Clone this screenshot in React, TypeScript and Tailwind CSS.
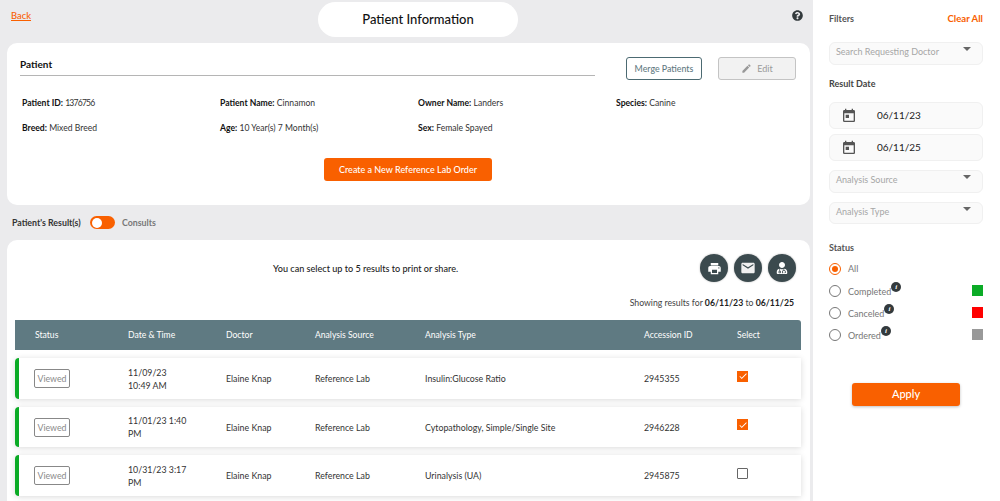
import React from "react";
import { MdPrint, MdEmail, MdToday, MdEdit, MdCheck } from "react-icons/md";
import { FaUserMd, FaQuestionCircle } from "react-icons/fa";

const font = "font-['Lato','Noto_Sans',sans-serif]";

function Field({ k, v, tight }: { k: string; v: string; tight?: boolean }) {
  return (
    <div className="text-[8.6px] leading-[14px] text-[#333]">
      <span className="font-bold text-[#111]">{k}:</span>{" "}
      <span className={tight ? "tracking-[-0.8px]" : ""}>{v}</span>
    </div>
  );
}

function Select({ label, className }: { label: string; className: string }) {
  return (
    <div className={`flex items-start justify-between bg-[#fafafa] border border-[#f0f0f0] rounded-md pl-[6px] pr-[11px] pt-[2px] ${className}`}>
      <span className="text-[9px] leading-[14px] text-[#a6a6a6]">{label}</span>
      <span className="mt-[2px] w-0 h-0 border-x-[4px] border-x-transparent border-t-[4px] border-t-[#666]" />
    </div>
  );
}

function DateBox({ value, className }: { value: string; className: string }) {
  return (
    <div className={`flex items-center h-[27px] bg-[#fafafa] border border-[#f0f0f0] rounded-md pl-[11px] ${className}`}>
      <MdToday className="text-[#555] w-[16px] h-[16px]" />
      <span className="ml-[20px] text-[10px] text-[#222]">{value}</span>
    </div>
  );
}

function Radio({ label, color, checked, className }: { label: string; color?: string; checked?: boolean; className?: string }) {
  return (
    <div className={`flex items-center h-[13px] ${className ?? ""}`}>
      <span className={`w-[12px] h-[12px] rounded-full border-[1.5px] flex items-center justify-center ${checked ? "border-[#f96000]" : "border-[#777]"}`}>
        {checked && <span className="w-[6px] h-[6px] rounded-full bg-[#f96000]" />}
      </span>
      <span className={`ml-[7px] text-[9px] text-[#777] leading-[13px] ${color ? "mt-[2px]" : ""}`}>{label}</span>
      {color && (
        <span className="w-[10px] h-[10px] -mt-[8px] rounded-full bg-[#333a3d] text-white text-[7px] leading-[10px] text-center italic font-bold font-['Liberation_Serif',serif]">i</span>
      )}
      {color && <span className="ml-auto w-[11px] h-[11px]" style={{ backgroundColor: color }} />}
    </div>
  );
}

function Row({ date, time, type, id, checked }: { date: string; time: string; type: string; id: string; checked: boolean }) {
  return (
    <div className="grid grid-cols-[109px_98px_89px_110px_219px_93px_1fr] items-center h-[40.5px] pt-[1px] mb-[8px] bg-white rounded-l-[4px] border-l-[4px] border-[#0bab26] shadow-[0_1px_6px_rgba(0,0,0,0.15)] text-[8.8px] text-[#333]">
      <div className="pl-[15px]">
        <span className="flex items-center justify-center w-[36px] h-[19px] border border-[#888] rounded-[2px] text-[#8a8a8a] text-[8.8px]">Viewed</span>
      </div>
      <div className="leading-[13px] whitespace-nowrap">{date}<br />{time}</div>
      <div>Elaine Knap</div>
      <div>Reference Lab</div>
      <div>{type}</div>
      <div>{id}</div>
      <div className="-mt-[5px]">
        {checked ? (
          <span className="flex items-center justify-center w-[11px] h-[11px] bg-[#f96000]">
            <MdCheck className="text-white w-[10px] h-[10px]" />
          </span>
        ) : (
          <span className="block w-[11px] h-[11px] border-[1.5px] border-[#666] rounded-[1px]" />
        )}
      </div>
    </div>
  );
}

function Round({ children }: { children: React.ReactNode }) {
  return (
    <span className="flex items-center justify-center w-[28px] h-[28px] rounded-full bg-[#3b4a4e] text-white shadow-[0_0_2px_rgba(0,0,0,0.3)]">
      {children}
    </span>
  );
}

export default function App() {
  return (
    <div className={`${font} w-[1000px] h-[501px] overflow-hidden flex bg-[#ebebed]`}>
      <main className="w-[813px] shrink-0 flex flex-col pl-[7px] pr-[3px]">
        <header className="h-[43px] flex items-start shrink-0">
          <a className="mt-[9px] ml-[4px] w-[20px] text-[9.4px] font-medium leading-[14px] text-[#f96000] underline">Back</a>
          <div className="ml-[287px] mt-[2px] w-[200px] h-[35px] rounded-full bg-white flex items-center justify-center text-[13px] font-medium text-[#111]">Patient Information</div>
          <FaQuestionCircle className="ml-[274px] mt-[10px] w-[11px] h-[11px] text-[#333a3d]" />
        </header>

        <section className="h-[162px] shrink-0 bg-white rounded-[10px] pt-[14px]">
          <div className="flex items-start">
            <div className="ml-[13px] w-[575px] h-[19px] border-b border-[#b5b5b5] text-[10px] leading-[14px] font-bold text-[#111]">Patient</div>
            <button className="ml-[31px] w-[76px] h-[23px] border-[1.5px] border-[#4c6a72] rounded-[3px] text-[8.8px] text-[#5f7a82] font-medium">Merge Patients</button>
            <button className="ml-[16px] w-[78px] h-[23px] border border-[#c4c4c4] rounded-[3px] bg-[#f2f2f2] text-[9px] text-[#9a9a9a] flex items-center justify-center gap-[5px]">
              <MdEdit className="w-[11px] h-[11px] text-[#999]" /> Edit
            </button>
          </div>
          <div className="ml-[15px] mt-[16px] grid grid-cols-[198px_198px_198px_1fr] gap-y-[11px]">
            <Field k="Patient ID" v="1376756" tight />
            <Field k="Patient Name" v="Cinnamon" />
            <Field k="Owner Name" v="Landers" />
            <Field k="Species" v="Canine" />
            <Field k="Breed" v="Mixed Breed" />
            <Field k="Age" v="10 Year(s) 7 Month(s)" />
            <Field k="Sex" v="Female Spayed" />
          </div>
          <div className="flex justify-center mt-[23px] pr-[1px]">
            <button className="w-[168px] h-[23px] rounded-[3px] bg-[#f96000] text-white text-[9px] font-medium">Create a New Reference Lab Order</button>
          </div>
        </section>

        <div className="h-[35px] shrink-0 flex items-center pl-[5px] text-[8.8px] font-bold">
          <span className="w-[73px] whitespace-nowrap text-[#333]">Patient's Result(s)</span>
          <span className="ml-[5px] w-[25px] h-[13px] rounded-full bg-[#f96000] flex items-center pl-[2px]">
            <span className="w-[10px] h-[10px] rounded-full bg-white" />
          </span>
          <span className="ml-[7px] text-[#777]">Consults</span>
        </div>

        <section className="flex-1 bg-white rounded-t-[10px] pl-[8px] pr-[9px] overflow-hidden">
          <div className="flex items-start h-[42px] pt-[14px] pr-[5px]">
            <div className="ml-[258px] mt-[8px] text-[9.1px] leading-[14px] text-[#222] font-medium">You can select up to 5 results to print or share.</div>
            <div className="ml-auto flex gap-[6px]">
              <Round><MdPrint className="w-[15px] h-[15px]" /></Round>
              <Round><MdEmail className="w-[16px] h-[16px] text-[#f0f0f0]" /></Round>
              <Round><FaUserMd className="w-[12px] h-[12px]" /></Round>
            </div>
          </div>
          <div className="mt-[14px] h-[14px] pr-[7px] text-right text-[8.7px] leading-[14px] text-[#444]">
            Showing results for <b className="text-[#222]">06/11/23</b> to <b className="text-[#222]">06/11/25</b>
          </div>
          <div className="mt-[10px] grid grid-cols-[113px_98px_89px_110px_219px_93px_1fr] items-center h-[30px] mb-[8px] bg-[#5f7a82] rounded-tr-[3px] text-[8.6px] text-white">
            <div className="pl-[20px]">Status</div>
            <div>Date &amp; Time</div>
            <div>Doctor</div>
            <div>Analysis Source</div>
            <div>Analysis Type</div>
            <div>Accession ID</div>
            <div>Select</div>
          </div>
          <Row date="11/09/23" time="10:49 AM" type="Insulin:Glucose Ratio" id="2945355" checked />
          <Row date="11/01/23 1:40" time="PM" type="Cytopathology, Simple/Single Site" id="2946228" checked />
          <Row date="10/31/23 3:17" time="PM" type="Urinalysis (UA)" id="2945875" checked={false} />
        </section>
      </main>

      <aside className="flex-1 bg-white pl-[16px] pr-[17px] pt-[12px] flex flex-col">
        <div className="flex justify-between items-center h-[14px] font-bold">
          <span className="text-[9px] text-[#555]">Filters</span>
          <span className="text-[9.6px] text-[#f96000]">Clear All</span>
        </div>
        <Select label="Search Requesting Doctor" className="mt-[16px] h-[23px]" />
        <div className="mt-[12px] text-[9px] leading-[14px] font-bold text-[#444]">Result Date</div>
        <DateBox value="06/11/23" className="mt-[11px]" />
        <DateBox value="06/11/25" className="mt-[5px]" />
        <Select label="Analysis Source" className="mt-[9px] h-[23px]" />
        <Select label="Analysis Type" className="mt-[9px] h-[22px]" />
        <div className="mt-[17px] text-[9px] leading-[14px] font-bold text-[#555]">Status</div>
        <Radio label="All" checked className="mt-[7px]" />
        <Radio label="Completed" color="#0bab26" className="mt-[9px]" />
        <Radio label="Canceled" color="#ff0000" className="mt-[9px]" />
        <Radio label="Ordered" color="#999999" className="mt-[9px]" />
        <div className="flex justify-center mt-[42px]">
          <button className="w-[108px] h-[23px] rounded-[3px] bg-[#f96000] text-white text-[11px] font-medium shadow-[0_1px_3px_rgba(0,0,0,0.25)]">Apply</button>
        </div>
      </aside>
    </div>
  );
}
